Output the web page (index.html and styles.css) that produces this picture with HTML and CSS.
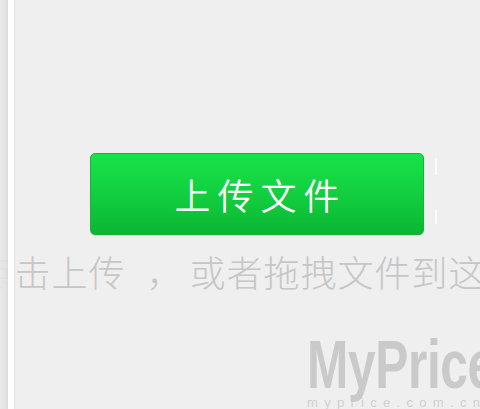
FILE: index.html
```html
<!DOCTYPE html>
<html lang="zh-CN">
<head>
<meta charset="utf-8">
<title>上传文件</title>
<link rel="stylesheet" href="styles.css">
</head>
<body>
<div class="page">
  <main class="drop">
    <button class="upload" type="button">上传文件</button>
    <p class="hint">点击上传<span class="comma">，</span>或者拖拽文件到这里</p>
  </main>
  <div class="edge-mark"></div>
  <div class="side"></div>
  <div class="divider"></div>
  <div class="watermark">
    <div class="wm-logo">MyPrice</div>
    <div class="wm-url">myprice.com.cn</div>
  </div>
</div>
</body>
</html>
```
FILE: styles.css
```css
html, body {
  margin: 0;
  padding: 0;
  height: 100%;
}
body {
  background: #efefef;
  font-family: "Noto Sans CJK SC", "Noto Sans", sans-serif;
  overflow: hidden;
}
.page {
  position: relative;
  width: 480px;
  height: 409px;
  overflow: hidden;
}
.drop {
  display: flex;
  flex-direction: column;
  align-items: center;
  padding-left: 34px;
  padding-top: 153px;
}
.upload {
  width: 334px;
  height: 82px;
  margin: 0;
  border: 1px solid #16b23a;
  border-radius: 5px;
  background: linear-gradient(to bottom, #17e34a 0%, #12cf3f 50%, #0bb632 100%);
  color: #ffffff;
  font-family: "Noto Sans CJK SC", sans-serif;
  font-size: 36px;
  font-weight: 350;
  letter-spacing: 7px;
  text-indent: 7px;
  line-height: 1;
  padding: 0;
  box-shadow: 0 1px 1px rgba(0,0,0,0.12);
}
.hint {
  margin: 18px 0 0 0;
  white-space: nowrap;
  font-size: 36px;
  font-weight: 300;
  letter-spacing: 1px;
  line-height: 36px;
  color: #c6c6c6;
  flex-shrink: 0;
  margin-right: 14px;
}
.comma {
  margin-left: 21px;
  margin-right: 6px;
}
.edge-mark {
  position: absolute;
  left: 435px;
  top: 158px;
  width: 2px;
  height: 66px;
  background: linear-gradient(to bottom, #fbfbfb 0px, #fbfbfb 17px, transparent 17px, transparent 52px, #fbfbfb 52px, #fbfbfb 66px);
}
.side {
  position: absolute;
  left: 0;
  top: 0;
  width: 8px;
  height: 100%;
  background: linear-gradient(to right, #e9e9e9, #e2e2e2 70%, #d8d8d8);
  opacity: 0.9;
}
.divider {
  position: absolute;
  left: 8px;
  top: 0;
  width: 6px;
  height: 100%;
  background: #ffffff;
  box-shadow: 1px 0 2px rgba(0,0,0,0.05);
}
.watermark {
  position: absolute;
  left: 307px;
  top: 334px;
  color: #cacaca;
  white-space: nowrap;
}
.wm-logo {
  font-family: "Liberation Sans", Arial, sans-serif;
  font-weight: bold;
  font-size: 68px;
  line-height: 60px;
  letter-spacing: -0.5px;
  transform: scaleX(0.73);
  transform-origin: left top;
}
.wm-url {
  font-family: "Liberation Sans", Arial, sans-serif;
  font-size: 13px;
  line-height: 13px;
  letter-spacing: 6.3px;
  margin-top: 2px;
  color: #d0d0d0;
}
```
